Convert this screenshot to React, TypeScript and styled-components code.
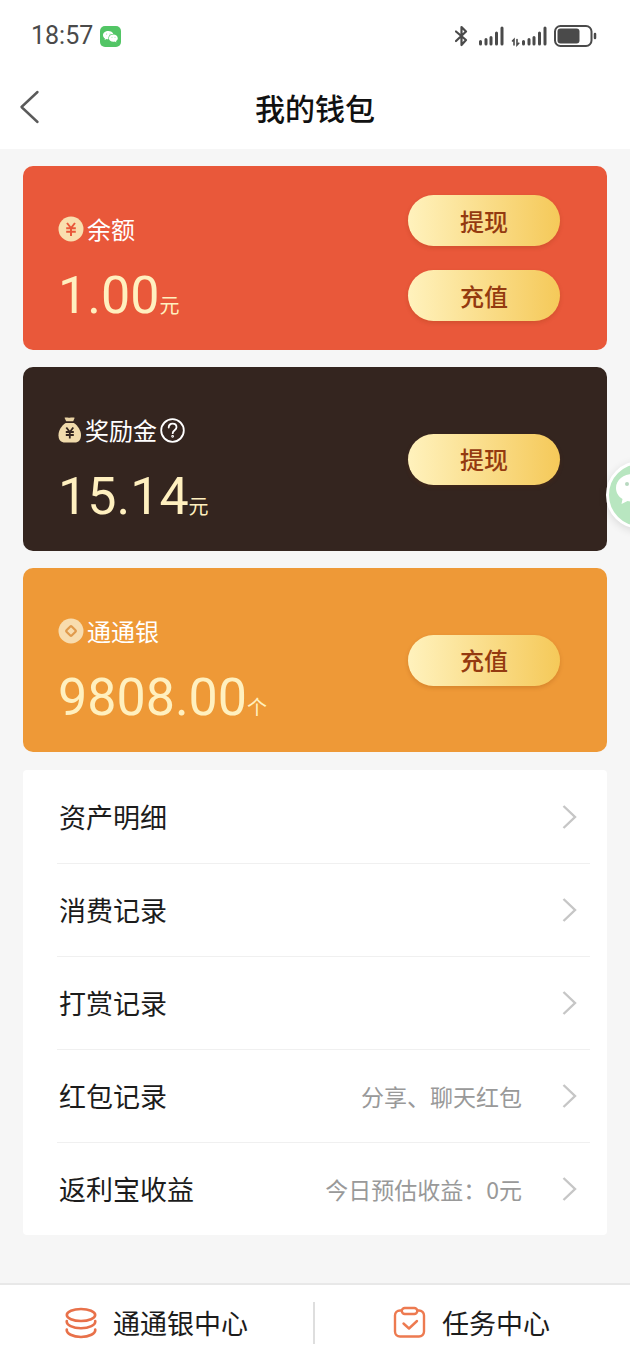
import React from 'react';
import styled, { createGlobalStyle } from 'styled-components';

const GlobalStyle = createGlobalStyle`
  *, *::before, *::after { box-sizing: border-box; }
  body {
    margin: 0;
    background: #f6f6f6;
    color: #1c1c1c;
    font-family: 'Noto Sans CJK SC', sans-serif;
  }
  button { font-family: inherit; cursor: pointer; }
  a { color: inherit; text-decoration: none; }
  svg { display: block; flex: none; }
`;

const Page = styled.div`
  display: flex;
  flex-direction: column;
  min-height: 100vh;
`;

const StatusBar = styled.div`
  display: flex;
  align-items: center;
  justify-content: space-between;
  height: 72px;
  padding: 0 33px 0 31px;
  background: #fff;
`;

const StatusGroup = styled.div`
  display: flex;
  align-items: center;
  gap: 7px;
`;

const Clock = styled.time`
  font-family: Roboto, sans-serif;
  font-size: 25px;
  line-height: 32px;
  color: #4a4a4a;
`;

const Header = styled.header`
  display: grid;
  grid-template-columns: 60px 1fr 60px;
  align-items: center;
  height: 77px;
  padding-bottom: 8px;
  background: #fff;
`;

const BackButton = styled.button`
  display: flex;
  padding: 10px 18px;
  border: 0;
  background: none;
`;

const Title = styled.h1`
  margin: 0;
  font-size: 30px;
  line-height: 40px;
  font-weight: 500;
  text-align: center;
  color: #111;
`;

const Main = styled.main`
  flex: 1;
  padding: 17px 23px 48px;
`;

const Cards = styled.div`
  display: flex;
  flex-direction: column;
  gap: 17px;
`;

const Card = styled.section<{ $color: string }>`
  display: flex;
  align-items: center;
  justify-content: space-between;
  min-height: 184px;
  padding: 0 47px 0 35px;
  border-radius: 10px;
  background: ${(p) => p.$color};
`;

const CardInfo = styled.div`
  display: flex;
  flex-direction: column;
  gap: 20px;
  padding-top: 32px;
`;

const CardLabel = styled.h2`
  display: flex;
  align-items: center;
  gap: 3px;
  margin: 0;
  font-size: 24px;
  line-height: 34px;
  font-weight: 400;
  color: #fff;
`;

const HelpButton = styled.button`
  display: flex;
  padding: 0;
  border: 0;
  background: none;
`;

const Amount = styled.p`
  margin: 0;
  font-family: Roboto, 'Noto Sans CJK SC', sans-serif;
  font-size: 52px;
  line-height: 60px;
  color: #fff0bf;
  white-space: nowrap;
`;

const Unit = styled.span`
  font-size: 20px;
`;

const Actions = styled.div`
  display: flex;
  flex-direction: column;
  gap: 24px;
`;

const ActionButton = styled.button`
  width: 152px;
  height: 51px;
  padding: 0;
  border: 0;
  border-radius: 26px;
  background: linear-gradient(90deg, #fff2bd, #f5c959);
  box-shadow: 0 2px 4px rgba(120, 50, 0, 0.2);
  font-size: 24px;
  line-height: 34px;
  font-weight: 500;
  color: #943a10;
`;

const Menu = styled.ul`
  margin: 18px 0 0;
  padding: 0 17px 0 34px;
  list-style: none;
  border-radius: 4px;
  background: #fff;
`;

const MenuItem = styled.li`
  & + & { border-top: 1px solid #f0f0f0; }
  &:first-child > a { height: 93px; }
`;

const MenuLink = styled.a`
  display: flex;
  align-items: center;
  height: 92px;
  padding: 0 13px 0 2px;
`;

const MenuName = styled.span`
  flex: 1;
  font-size: 27px;
  line-height: 38px;
`;

const MenuNote = styled.span`
  margin-right: 39px;
  font-size: 23px;
  line-height: 34px;
  color: #999;
`;

const Footer = styled.nav`
  display: flex;
  align-items: center;
  height: 77px;
  padding-right: 2px;
  border-top: 2px solid #e8e8e8;
  background: #fff;
`;

const FooterLink = styled.a`
  display: flex;
  flex: 1;
  align-items: center;
  justify-content: center;
  gap: 16px;
  font-size: 27px;
  line-height: 38px;
`;

const FooterDivider = styled.span`
  width: 2px;
  height: 42px;
  background: #dedede;
`;

const ChatBubble = styled.button`
  position: fixed;
  top: 461px;
  right: -44px;
  width: 68px;
  height: 68px;
  padding: 0;
  border: 3px solid #fff;
  border-radius: 50%;
  background: #b8e6c0;
  box-shadow: 0 2px 8px rgba(0, 0, 0, 0.12);
`;

const WeChatBadge = () => (
  <svg width="21" height="21" viewBox="0 0 21 21" aria-hidden="true">
    <rect width="21" height="21" rx="5" fill="#52c565" />
    <path d="M8.300 5C5.300 5 3 6.900 3 9.200c0 1.400.8 2.500 2 3.300l-.4 1.500 1.800-.9c.7.2 1.200.3 2 .2A4.400 4.400 0 0 1 13.300 8C12.700 6.200 10.700 5 8.300 5z" fill="#fff" />
    <path d="M13.400 8.600c-2.600 0-4.500 1.600-4.500 3.600s2 3.600 4.500 3.600c.5 0 1-.1 1.500-.2l1.500.8-.4-1.300c1.100-.7 1.800-1.700 1.800-2.900 0-2-2-3.600-4.400-3.600z" fill="#fff" />
    <g fill="#8bd998"><circle cx="6.600" cy="8" r=".6" /><circle cx="10" cy="8" r=".6" /><circle cx="12" cy="11.200" r=".5" /><circle cx="15" cy="11.200" r=".5" /></g>
  </svg>
);

const BluetoothIcon = () => (
  <svg width="16" height="22" viewBox="1 0 16 22" fill="none" stroke="#4a4a4a" strokeWidth="2.200" strokeLinejoin="round" strokeLinecap="round" aria-hidden="true">
    <path d="M2 6.500l10 8.500-4.500 5V2L12 6.500 2 16" />
  </svg>
);

const SignalIcon = ({ data }: { data?: boolean }) => (
  <svg width={data ? 36 : 26} height="22" viewBox={data ? '-10 0 36 22' : '0 0 26 22'} stroke="#4a4a4a" strokeWidth="3" strokeLinecap="round" fill="none" aria-hidden="true">
    <path d="M2.500 16.500v2.500M8 14.500v4.500M13 12.500v6.500M18.500 8v11M24 3v16" />
    {data && <path d="M-8.500 16l1.500-1.500V20M-4 14.500V20l1.800-1.800" strokeWidth="1.600" />}
  </svg>
);

const BatteryIcon = () => (
  <svg width="43" height="22" viewBox="0 0 43 22" aria-hidden="true">
    <rect x="1" y="1" width="36.500" height="20" rx="5.500" fill="none" stroke="#4a4a4a" strokeWidth="2" />
    <rect x="3.500" y="3.500" width="22" height="15" rx="3" fill="#4a4a4a" />
    <path d="M41 9v4" stroke="#4a4a4a" strokeWidth="2.500" strokeLinecap="round" />
  </svg>
);

const BackIcon = () => (
  <svg width="24" height="34" viewBox="0 0 24 34" fill="none" stroke="#5a5a5a" strokeWidth="2.400" strokeLinecap="round" strokeLinejoin="round" aria-hidden="true">
    <path d="M19.500 2L3.500 17l16 15" />
  </svg>
);

const CoinIcon = () => (
  <svg width="26" height="26" viewBox="0 0 26 26" aria-hidden="true">
    <circle cx="13" cy="13" r="12.500" fill="#f9dfaf" />
    <path d="M9 7l4 5 4-5M13 12v8M8.200 12.300h9.600M8.200 15.700h9.600" fill="none" stroke="#e9583a" strokeWidth="2" />
  </svg>
);

const MoneyBagIcon = () => (
  <svg width="24" height="26" viewBox="0 0 24 26" aria-hidden="true">
    <path d="M6.500.8c2-.6 3.500.3 5.200-.1 1.700-.4 3.500-.5 5 .1l-1.500 3.500h-7z" fill="#e9d3a4" />
    <path d="M7.600 6h8.300c3.800 2.700 7.100 7.400 7.100 12 0 5-2.500 7.500-6.300 7.500H7C3 25.500.5 23 .5 18.200.5 13 3.800 8.600 7.600 6z" fill="#f1dbac" />
    <path d="M8.300 10.500l3.500 4.500 3.500-4.500M11.800 15v6.500M7.800 15h8M7.800 18h8" fill="none" stroke="#34251f" strokeWidth="1.800" />
  </svg>
);

const SilverIcon = () => (
  <svg width="26" height="26" viewBox="0 0 26 26" aria-hidden="true">
    <circle cx="13" cy="13" r="12.500" fill="#f8dcae" />
    <rect x="9.300" y="9.300" width="7.400" height="7.400" rx="1" transform="rotate(45 13 13)" fill="none" stroke="#e09a4c" strokeWidth="2.200" />
  </svg>
);

const HelpIcon = () => (
  <svg width="25" height="25" viewBox="0 0 25 25" fill="none" stroke="#fff" strokeWidth="1.800" strokeLinecap="round" aria-hidden="true">
    <circle cx="12.500" cy="12.500" r="11.300" />
    <path d="M8.700 9.500c0-2.300 1.600-3.800 3.900-3.800s3.900 1.500 3.900 3.500c0 3.100-3.800 2.900-3.800 6" />
    <circle cx="12.600" cy="18.300" r=".5" />
  </svg>
);

const ChevronIcon = () => (
  <svg width="16" height="26" viewBox="0 0 16 26" fill="none" stroke="#c6c6c6" strokeWidth="2.400" aria-hidden="true">
    <path d="M2.500 2L14 13 2.500 24" />
  </svg>
);

const StackIcon = () => (
  <svg width="32" height="32" viewBox="0 0 32 32" fill="none" stroke="#e8714a" strokeWidth="2.600" strokeLinecap="round" aria-hidden="true">
    <ellipse cx="16" cy="8" rx="14.200" ry="6" />
    <path d="M1.800 14c-.8 4 6.200 7.200 14.200 7.200S31 18 30.200 14M1.800 22.500C1 26.500 8 30 16 30s15-3.500 14.200-7.500" />
  </svg>
);

const TaskIcon = () => (
  <svg width="33" height="33" viewBox="0 0 33 33" fill="none" stroke="#ed7a50" strokeWidth="2.400" strokeLinecap="round" strokeLinejoin="round" aria-hidden="true">
    <path d="M8.500 4.500H7A5 5 0 0 0 2 9.500v16a5 5 0 0 0 5 5h19a5 5 0 0 0 5-5v-16a5 5 0 0 0-5-5h-1.500" />
    <rect x="8.800" y="2" width="15.500" height="6" rx="3" />
    <path d="M10.500 17.500l5.500 5 8-7.500" />
  </svg>
);

const ChatIcon = () => (
  <svg width="62" height="62" viewBox="0 0 62 62" aria-hidden="true">
    <path d="M24 10C14.500 10 7 16 7 24c0 4.700 2.500 8.500 6.500 11L12.500 40l6-3c2 .6 3.700.8 5.500.8C33.500 37.800 41 32 41 24s-7.500-14-17-14z" fill="#fff" />
    <path d="M38 24c-8.500 0-15 5.500-15 12.500S29.500 49 38 49c2 0 3.500-.3 5-.8l5 2.800-1.200-4.500C50.500 44.200 53 40.700 53 36.500 53 29.500 46.500 24 38 24z" fill="#fff" stroke="#b8e6c0" strokeWidth="2" />
    <circle cx="18" cy="20" r="2" fill="#b8d8c0" /><circle cx="30" cy="20" r="2" fill="#b8d8c0" />
  </svg>
);

const menu = [
  { name: '资产明细' },
  { name: '消费记录' },
  { name: '打赏记录' },
  { name: '红包记录', note: '分享、聊天红包' },
  { name: '返利宝收益', note: '今日预估收益：0元' },
];

type WalletCardProps = {
  color: string;
  icon: React.ReactNode;
  label: string;
  help?: boolean;
  amount: string;
  unit: string;
  actions: string[];
};

const WalletCard = ({ color, icon, label, help, amount, unit, actions }: WalletCardProps) => (
  <Card $color={color}>
    <CardInfo>
      <CardLabel>
        {icon}
        {label}
        {help && <HelpButton type="button" aria-label="说明"><HelpIcon /></HelpButton>}
      </CardLabel>
      <Amount>{amount}<Unit>{unit}</Unit></Amount>
    </CardInfo>
    <Actions>
      {actions.map((a) => <ActionButton type="button" key={a}>{a}</ActionButton>)}
    </Actions>
  </Card>
);

export default function App() {
  return (
    <Page lang="zh-CN">
      <GlobalStyle />
      <StatusBar>
        <StatusGroup>
          <Clock>18:57</Clock>
          <WeChatBadge />
        </StatusGroup>
        <StatusGroup>
          <BluetoothIcon />
          <SignalIcon />
          <SignalIcon data />
          <BatteryIcon />
        </StatusGroup>
      </StatusBar>
      <Header>
        <BackButton type="button" aria-label="返回"><BackIcon /></BackButton>
        <Title>我的钱包</Title>
      </Header>
      <Main>
        <Cards>
          <WalletCard color="#e9583a" icon={<CoinIcon />} label="余额" amount="1.00" unit="元" actions={['提现', '充值']} />
          <WalletCard color="#34251f" icon={<MoneyBagIcon />} label="奖励金" help amount="15.14" unit="元" actions={['提现']} />
          <WalletCard color="#ee9937" icon={<SilverIcon />} label="通通银" amount="9808.00" unit="个" actions={['充值']} />
        </Cards>
        <Menu>
          {menu.map(({ name, note }) => (
            <MenuItem key={name}>
              <MenuLink href="#">
                <MenuName>{name}</MenuName>
                {note && <MenuNote>{note}</MenuNote>}
                <ChevronIcon />
              </MenuLink>
            </MenuItem>
          ))}
        </Menu>
      </Main>
      <Footer>
        <FooterLink href="#"><StackIcon />通通银中心</FooterLink>
        <FooterDivider />
        <FooterLink href="#"><TaskIcon />任务中心</FooterLink>
      </Footer>
      <ChatBubble type="button" aria-label="微信"><ChatIcon /></ChatBubble>
    </Page>
  );
}
